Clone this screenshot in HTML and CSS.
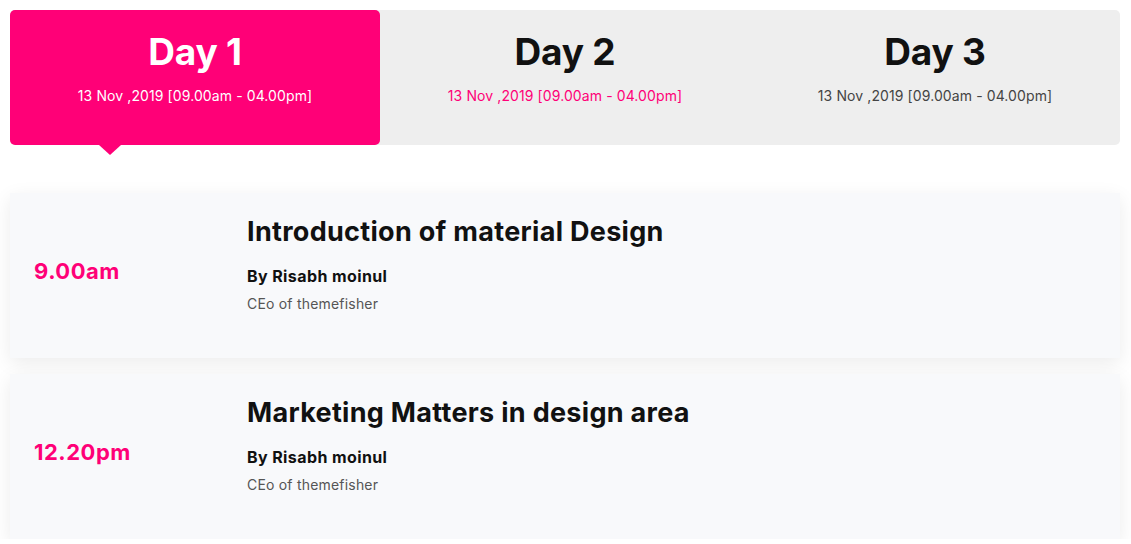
FILE: index.html
```html
<!DOCTYPE html>
<html lang="en">
<head>
<meta charset="utf-8">
<title>Schedule</title>
<link rel="stylesheet" href="styles.css">
</head>
<body>
<div class="wrap">
  <ul class="tabs">
    <li class="tab active">
      <h3 class="tab-day">Day 1</h3>
      <p class="tab-date">13 Nov ,2019 [09.00am - 04.00pm]</p>
    </li>
    <li class="tab pinkdate">
      <h3 class="tab-day">Day 2</h3>
      <p class="tab-date">13 Nov ,2019 [09.00am - 04.00pm]</p>
    </li>
    <li class="tab">
      <h3 class="tab-day">Day 3</h3>
      <p class="tab-date">13 Nov ,2019 [09.00am - 04.00pm]</p>
    </li>
  </ul>

  <div class="sessions">
    <div class="card">
      <div class="time">9.00am</div>
      <div class="info">
        <h4 class="title">Introduction of material Design</h4>
        <p class="by">By Risabh moinul</p>
        <p class="role">CEo of themefisher</p>
      </div>
    </div>
    <div class="card">
      <div class="time">12.20pm</div>
      <div class="info">
        <h4 class="title">Marketing Matters in design area</h4>
        <p class="by">By Risabh moinul</p>
        <p class="role">CEo of themefisher</p>
      </div>
    </div>
  </div>
</div>
</body>
</html>
```

FILE: styles.css
```css
* { box-sizing: border-box; }
html, body { margin: 0; padding: 0; background: #fff; }
body {
  font-family: "Inter", "Open Sans", "DejaVu Sans", sans-serif;
  color: #111;
  overflow: hidden;
}
.wrap {
  width: 1110px;
  margin: 10px 0 0 10px;
}
.tabs {
  list-style: none;
  margin: 0;
  padding: 0;
  display: grid;
  grid-template-columns: repeat(3, 1fr);
  background: #eeeeee;
  border-radius: 5px;
}
.tab {
  height: 135px;
  text-align: center;
  padding-top: 23px;
  position: relative;
  border-radius: 5px;
}
.tab-day {
  margin: 0;
  font-size: 37px;
  line-height: 38px;
  font-weight: 700;
  letter-spacing: -0.2px;
  color: #111;
}
.tab-date {
  margin: 15px 0 0;
  font-size: 14px;
  line-height: 20px;
  color: #444;
  font-weight: 400;
  letter-spacing: 0.1px;
}
.tab.active { background: #ff0077; }
.tab.active .tab-day, .tab.active .tab-date { color: #fff; }
.tab.pinkdate .tab-date { color: #ff0077; }
.tab.active::after {
  content: "";
  position: absolute;
  left: 89px;
  bottom: -10px;
  border-left: 11px solid transparent;
  border-right: 11px solid transparent;
  border-top: 10px solid #ff0077;
}
.sessions {
  margin-top: 48px;
  display: flex;
  flex-direction: column;
  gap: 16px;
}
.card {
  background: #f8f9fb;
  height: 165px;
  display: grid;
  grid-template-columns: 237px 1fr;
  align-items: start;
  box-shadow: 0 5px 18px rgba(0, 0, 0, 0.08);
}
.time {
  align-self: center;
  padding-left: 24px;
  color: #ff0077;
  font-size: 22px;
  font-weight: 700;
  letter-spacing: 0.5px;
  margin-top: -10px;
}
.info { padding-top: 21px; }
.title {
  margin: 0;
  font-size: 27px;
  line-height: 36px;
  font-weight: 700;
  letter-spacing: 0.3px;
  color: #111;
}
.by {
  margin: 15px 0 0;
  font-size: 16px;
  line-height: 22px;
  font-weight: 700;
  letter-spacing: 0.4px;
  color: #111;
}
.role {
  margin: 7px 0 0;
  font-size: 14px;
  line-height: 20px;
  letter-spacing: 0.2px;
  color: #555;
}
```
